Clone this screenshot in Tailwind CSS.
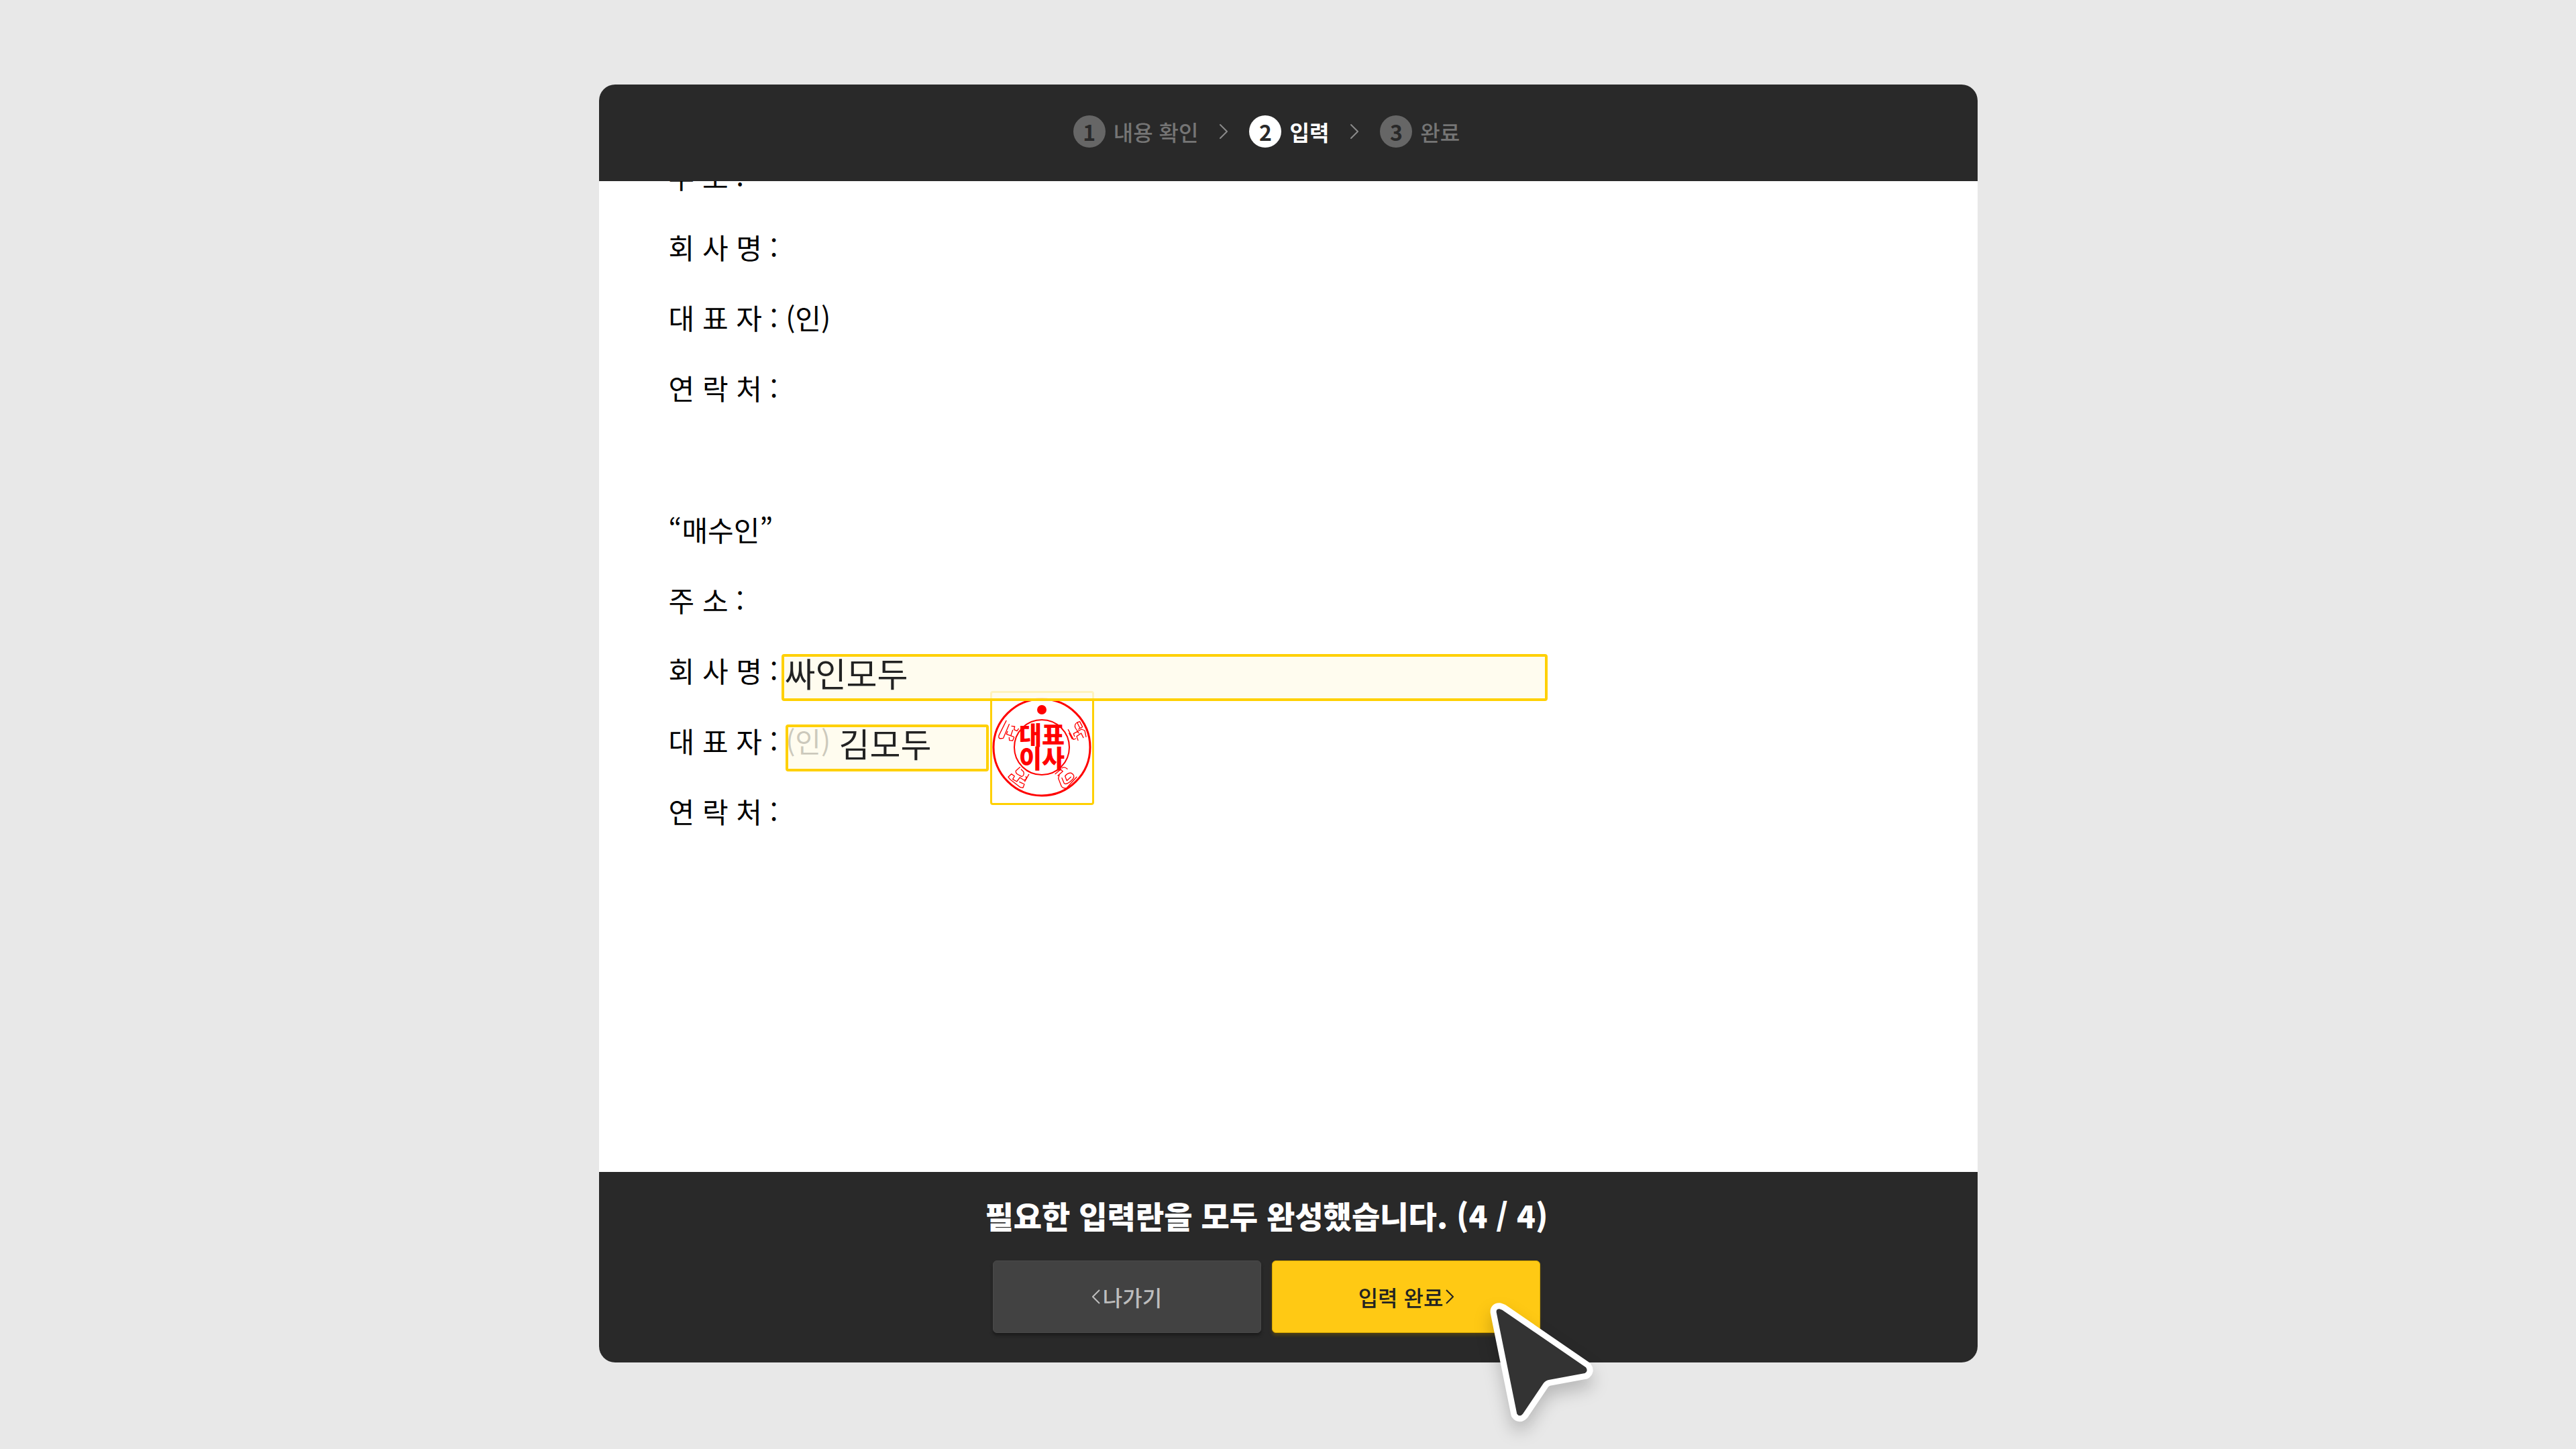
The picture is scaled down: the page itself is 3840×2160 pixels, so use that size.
<!DOCTYPE html>
<html lang="ko">
<head>
    <meta charset="UTF-8">
    <meta name="viewport" content="width=device-width, initial-scale=1.0">
    <title>입력</title>
    <script src="https://cdn.jsdelivr.net/npm/@tailwindcss/browser@4"></script>
</head>
<body class="min-h-screen bg-[#e8e8e8] font-['Noto_Sans_CJK_KR',sans-serif]">
  <div class="flex justify-center pt-[126px] pb-32">
    <div class="relative flex w-[2055px] max-w-full flex-col">
      <div class="flex flex-col overflow-hidden rounded-3xl bg-white">

        <!-- steps -->
        <header class="bg-[#292929] pr-16">
          <ol class="flex h-36 items-center justify-center gap-8 pb-1 text-[32px] font-medium text-[#757575]">
            <li class="flex items-center gap-3">
              <span class="flex size-12 items-center justify-center rounded-full bg-[#666] font-bold text-[#292929]">1</span>
              <span>내용 확인</span>
            </li>
            <li aria-hidden="true"><svg class="h-6 w-3" viewBox="0 0 12 24" fill="none" stroke="#8a8a8a" stroke-width="2" stroke-linecap="round"><path d="M1 2l10 10-10 10"/></svg></li>
            <li class="flex items-center gap-3 text-white" aria-current="step">
              <span class="flex size-12 items-center justify-center rounded-full bg-white font-bold text-[#292929]">2</span>
              <span class="font-bold">입력</span>
            </li>
            <li aria-hidden="true"><svg class="h-6 w-3" viewBox="0 0 12 24" fill="none" stroke="#8a8a8a" stroke-width="2" stroke-linecap="round"><path d="M1 2l10 10-10 10"/></svg></li>
            <li class="flex items-center gap-3">
              <span class="flex size-12 items-center justify-center rounded-full bg-[#666] font-bold text-[#292929]">3</span>
              <span>완료</span>
            </li>
          </ol>
        </header>

        <!-- contract -->
        <main class="h-[1477px] overflow-hidden px-26 text-[42px] leading-[105px] text-black">
          <section class="-mt-15">
            <p>주 소 :</p>
            <p>회 사 명 :</p>
            <p>대 표 자 : (인)</p>
            <p>연 락 처 :</p>
          </section>
          <section class="mt-[106px]">
            <p>“매수인”</p>
            <p>주 소 :</p>
            <div class="relative z-10 flex items-end gap-1.5">
              <label for="company">회 사 명 :</label>
              <input id="company" type="text" value="싸인모두" class="mb-1.5 h-[70px] w-[1142px] rounded-sm border-4 border-[#ffd000] bg-[#fffbeb]/80 pb-4 text-[50px] text-[#222]">
            </div>
            <div class="relative flex items-end">
              <label for="owner">대 표 자 : (인)</label>
              <input id="owner" type="text" value="김모두" class="absolute bottom-1.5 left-[174px] h-[70px] w-[303px] rounded-sm border-4 border-[#ffd000] bg-[#fffbeb]/80 pb-4 pl-19 text-[50px] text-[#222]">
              <button type="button" aria-label="인감 도장" class="absolute -bottom-11 left-[479px] h-[170px] w-[155px] rounded-sm border-3 border-[#ffd000]">
                <svg class="size-full" viewBox="3 3 149 164" fill="none" stroke="#f00" stroke-linecap="round" stroke-linejoin="round">
                  <circle cx="77" cy="84" r="72" stroke-width="3"/>
                  <circle cx="77" cy="84" r="41" stroke-width="2"/>
                  <circle cx="77" cy="28" r="7" fill="#f00" stroke="none"/>
                  <g fill="#f00" stroke="none" font-size="37" font-weight="900" text-anchor="middle">
                    <text x="77" y="80">대표</text>
                    <text x="77" y="115">이사</text>
                  </g>
                  <!-- ornaments between the rings -->
                  <g transform="translate(1 35) scale(.3333)" stroke-width="4">
                    <path d="M69 28L36 94Q33 108 44 108L56 106 82 44"/>
                    <path d="M93 52L107 54 104 68 117 74 124 64M75 76L70 88 102 100M98 70L90 94M82 103L83 116 98 117 104 102"/>
                    <path d="M346 68L370 112 380 108M350 84L364 110M378 60Q372 44 386 36L398 32M378 60L394 84M386 36L398 60M398 32L410 56 392 66M374 98L370 86 406 66 420 72 426 100M390 116L384 98 404 84 414 104"/>
                    <path d="M130 236L112 252Q110 264 124 270L138 278Q152 272 146 256L136 246M170 268L152 300M78 280L92 266 106 276 98 290 116 300 130 282 148 294Q162 292 157 278M78 280L86 290 132 326 144 328 150 312 128 302"/>
                    <path d="M288 266L312 246 322 254 300 274M318 240Q330 232 342 244M306 272L302 286 316 322Q326 334 340 328L384 280M318 284L328 308Q340 318 368 288 378 272 360 262 344 260 332 276L340 296 358 280"/>
                  </g>
                </svg>
              </button>
            </div>
            <p>연 락 처 :</p>
          </section>
        </main>

        <!-- actions -->
        <footer class="flex flex-col items-center bg-[#292929] pt-7 pr-16 pb-11">
          <p class="text-[46px] leading-[72px] font-black text-white">필요한 입력란을 모두 완성했습니다. (4 / 4)</p>
          <div class="mt-8 flex gap-4 text-[32px] font-medium">
            <button type="button" class="flex h-27 w-100 items-center justify-center gap-1 rounded-md border border-[#4a4a4a] bg-[#424242] text-[#bdbdbd] shadow-[0_4px_4px_#1c1c1c]">
              <svg class="h-6 w-3" viewBox="0 0 12 24" fill="none" stroke="currentColor" stroke-width="2"><path d="M11 2L1 12l10 10"/></svg>나가기
            </button>
            <button type="button" class="flex h-27 w-100 items-center justify-center gap-1 rounded-md border border-[#d9a900] bg-[#ffc914] text-[#222] shadow-[0_4px_4px_#4a3e18]">
              입력 완료<svg class="h-6 w-3" viewBox="0 0 12 24" fill="none" stroke="currentColor" stroke-width="2"><path d="M1 2l10 10-10 10"/></svg>
            </button>
          </div>
        </footer>
      </div>

      <!-- pointer -->
      <svg class="pointer-events-none absolute right-132 -bottom-32 h-60 w-55 drop-shadow-[0_14px_12px_rgba(0,0,0,0.2)]" viewBox="0 0 660 720" aria-hidden="true">
        <path d="M92 112Q90 96 106 97L118 101 492 358Q504 374 488 384L326 414Q310 418 302 430L210 566Q196 582 184 566Z" fill="#333" stroke="#fff" stroke-width="54" stroke-linejoin="round" paint-order="stroke"/>
      </svg>
    </div>
  </div>
</body>
</html>
